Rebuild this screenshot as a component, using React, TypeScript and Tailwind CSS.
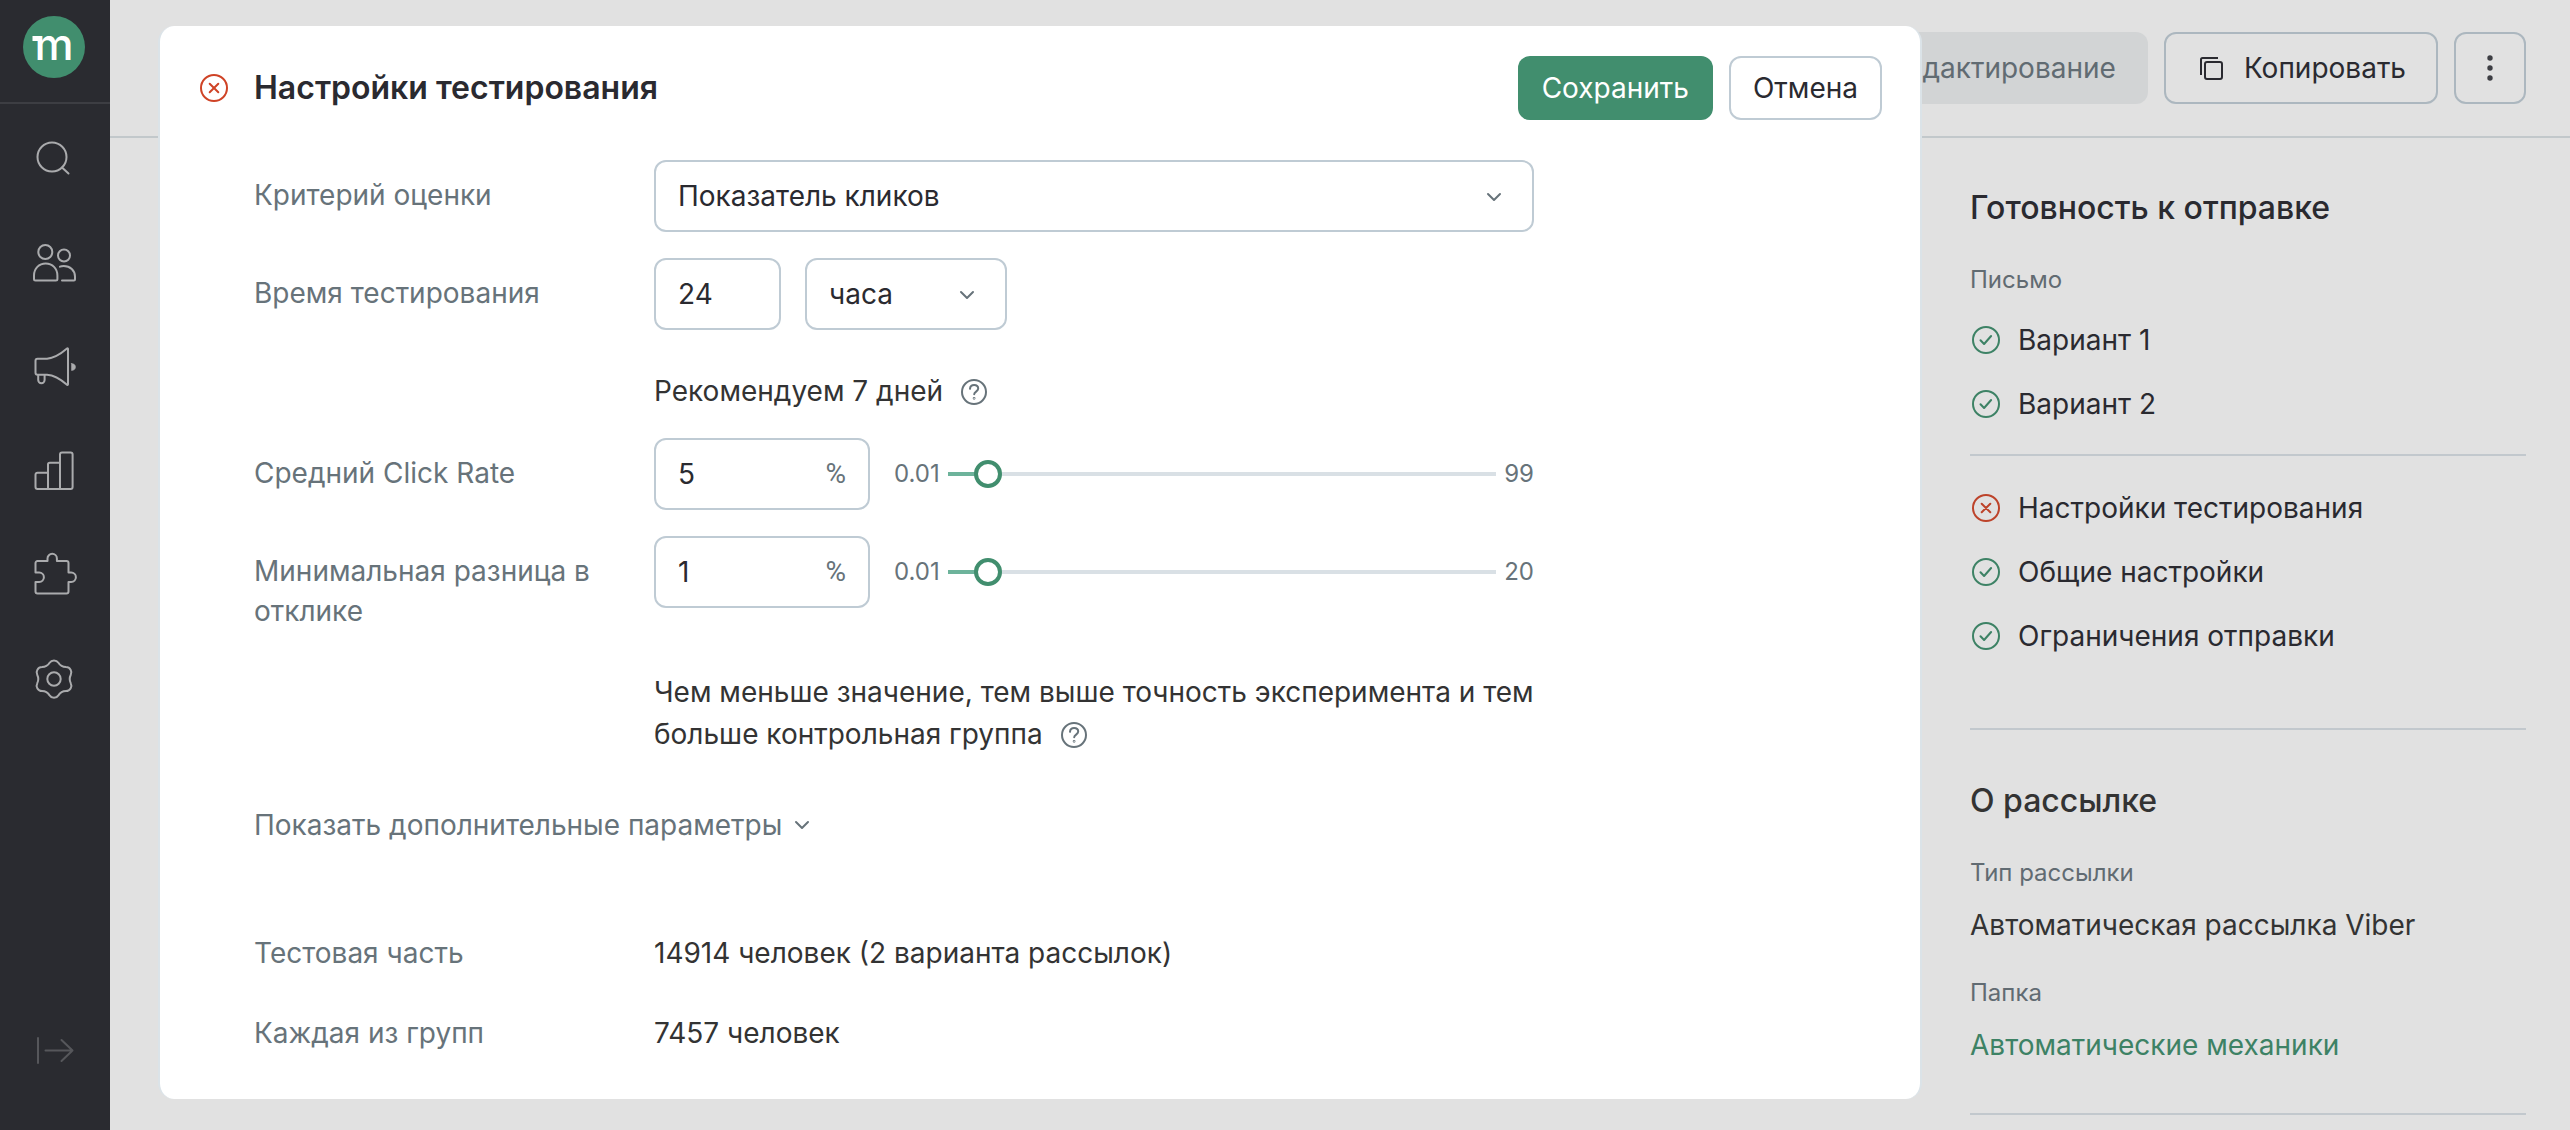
import { useState } from "react";
import type { ReactNode } from "react";

function Icon({ children }: { children: ReactNode }) {
  return (
    <svg
      width="44"
      height="44"
      viewBox="0 0 44 44"
      fill="none"
      stroke="currentColor"
      strokeWidth="2"
      strokeLinecap="round"
      strokeLinejoin="round"
      aria-hidden="true"
    >
      {children}
    </svg>
  );
}

const navItems = [
  {
    label: "Поиск",
    icon: (
      <>
        <circle cx="19" cy="21" r="14.5" />
        <path d="M29 31.5 35.5 37.5" />
      </>
    ),
  },
  {
    label: "Клиенты",
    icon: (
      <>
        <circle cx="12.3" cy="12" r="7" />
        <circle cx="31" cy="15.5" r="6" />
        <path d="M2.5 40.5a1.5 1.5 0 0 1-1.5-1.5v-3.500c0-7 5-12 11.700-12s11.700 5 11.700 12v3.500a1.500 1.500 0 0 1-1.500 1.500z" />
        <path d="M27 26.700c1-.5 2.300-.7 3.700-.7 6.500 0 11.300 4.500 11.300 10.500v3a1 1 0 0 1-1 1H29" />
      </>
    ),
  },
  {
    label: "Кампании",
    icon: (
      <>
        <path d="M14 14.700H4.500a2 2 0 0 0-2 2v12a2 2 0 0 0 2 2H14c8 .5 14 4.800 20 10 .6.5 1 .3 1-.4V5c0-.7-.4-.9-1-.4-6 5.200-12 9.600-20 10.100z" />
        <path d="M5.200 31v5a3.200 3.200 0 0 0 6.400 0v-5" />
        <path d="M38.500 19.500v7c2.300 0 4-1.500 4-3.500s-1.700-3.500-4-3.500z" fill="currentColor" strokeWidth="0.5" />
      </>
    ),
  },
  {
    label: "Отчеты",
    icon: (
      <>
        <path d="M4.500 24.700H15V16.500a1.800 1.800 0 0 1 1.800-1.800H27V6.500a2 2 0 0 1 2-2h8.600a2 2 0 0 1 2 2v32.500a2 2 0 0 1-2 2H4.500a2 2 0 0 1-2-2V26.700a2 2 0 0 1 2-2z" />
        <path d="M15 24.700V41M27 14.700V41" />
      </>
    ),
  },
  {
    label: "Интеграции",
    icon: (
      <path d="M4.500 9H14.500V6.500a4.700 4.700 0 0 1 9.400 0V9h9.600a2 2 0 0 1 2 2v9.500h2.700a4.600 4.600 0 0 1 0 9.400h-2.700v9.600a2 2 0 0 1-2 2H4.500a2 2 0 0 1-2-2v-9.600h3.700a4.600 4.600 0 0 0 0-9.400H2.500V11a2 2 0 0 1 2-2z" />
    ),
  },
  {
    label: "Настройки",
    icon: (
      <>
        <circle cx="21" cy="23" r="6.700" />
        <path d="M16.600 6.800C17.800 5 19.200 4.500 21 4.500s3.200.5 4.400 2.300c1.900 3 4 4.200 7.600 4.300 2.200 0 3.600.9 4.600 2.600s1.300 3.200.2 5.100c-1.600 3.200-1.600 5.400 0 8.600 1.100 1.900.8 3.400-.2 5.100s-2.400 2.600-4.600 2.600c-3.600.1-5.700 1.300-7.600 4.300-1.200 1.800-2.600 2.400-4.400 2.400s-3.200-.6-4.400-2.400c-1.900-3-4-4.200-7.600-4.300-2.200 0-3.600-.9-4.600-2.600s-1.300-3.200-.2-5.100c1.600-3.200 1.600-5.400 0-8.600-1.100-1.900-.8-3.400.2-5.100s2.400-2.600 4.600-2.600c3.600-.1 5.700-1.300 7.600-4.300z" />
      </>
    ),
  },
];

function Sidebar() {
  return (
    <aside className="flex w-[110px] shrink-0 flex-col items-center bg-[#2a2b30] text-[#aaabad]">
      <div className="flex w-full justify-center border-b-2 border-[#3d3e43] pt-4 pb-6">
        <a href="#home" aria-label="Главная">
          <svg width="64" height="62" viewBox="0 0 64 62">
            <circle cx="31" cy="31" r="31" fill="#418e6e" />
            <rect x="9.500" y="20" width="6" height="5" fill="#fff" />
            <text x="31" y="44" textAnchor="middle" fontSize="44" className="fill-white font-['Inter'] font-medium">
              m
            </text>
          </svg>
        </a>
      </div>

      <nav className="flex flex-col gap-[60px] pt-8">
        {navItems.map((item) => (
          <button key={item.label} type="button" aria-label={item.label}>
            <Icon>{item.icon}</Icon>
          </button>
        ))}
      </nav>

      <button type="button" aria-label="Развернуть меню" className="mt-auto mb-[58px] text-[#56575b]">
        <Icon>
          <path d="M5 10v25M12.500 22.500h27M28.500 12l11 10.500-11 10.500" />
        </Icon>
      </button>
    </aside>
  );
}

function StatusIcon({ ok, className }: { ok: boolean; className: string }) {
  return (
    <svg
      width="28"
      height="28"
      viewBox="0 0 28 28"
      fill="none"
      stroke="currentColor"
      strokeWidth="2"
      strokeLinecap="round"
      strokeLinejoin="round"
      className={className}
      aria-hidden="true"
    >
      <circle cx="14" cy="14" r="13" />
      {ok ? <path d="M8.500 14.200l3.600 3.800 7-8" /> : <path d="M9.700 9.700l8.600 8.600M18.300 9.700l-8.600 8.600" />}
    </svg>
  );
}

function HelpIcon() {
  return (
    <button type="button" aria-label="Подсказка" className="ml-[18px] inline-block align-[-4px] text-[#67737a]">
      <svg width="26" height="26" viewBox="0 0 26 26" fill="none" stroke="currentColor" strokeWidth="2" strokeLinecap="round">
        <circle cx="13" cy="13" r="12" />
        <path d="M9 9.800c.2-2.300 1.800-3.700 4.100-3.700s4.100 1.400 4.100 3.500c0 3-4 3-4 5.700" />
        <circle cx="13.100" cy="19.300" r="0.400" />
      </svg>
    </button>
  );
}

function Chevron({ className = "" }: { className?: string }) {
  return (
    <svg
      width="16"
      height="10"
      viewBox="0 0 16 10"
      fill="none"
      stroke="#67737a"
      strokeWidth="2"
      strokeLinecap="round"
      strokeLinejoin="round"
      className={className}
      aria-hidden="true"
    >
      <path d="M2 2l6 6 6-6" />
    </svg>
  );
}

function Select({ id, label, options, className }: { id: string; label?: string; options: string[]; className: string }) {
  return (
    <div className={`relative ${className}`}>
      <select
        id={id}
        aria-label={label}
        className="h-[72px] w-full appearance-none rounded-xl border-2 border-[#bfcbd4] bg-white px-[22px] text-[#2a2a30]"
      >
        {options.map((option) => (
          <option key={option}>{option}</option>
        ))}
      </select>
      <Chevron className="pointer-events-none absolute top-8 right-8" />
    </div>
  );
}

function Row({ label, htmlFor, children }: { label: string; htmlFor: string; children: ReactNode }) {
  return (
    <div className="flex">
      <label htmlFor={htmlFor} className="w-[400px] shrink-0 pt-[15px] pr-10 leading-10 text-[#67737a]">
        {label}
      </label>
      <div className="flex h-[72px] w-[880px] items-center">{children}</div>
    </div>
  );
}

function PercentSlider({ id, label, max, initial }: { id: string; label: string; max: number; initial: number }) {
  const [value, setValue] = useState(initial);
  const fill = ((value - 0.01) / (max - 0.01)) * 100;

  return (
    <>
      <div className="flex h-[72px] w-[216px] items-center rounded-xl border-2 border-[#bfcbd4] px-[22px]">
        <input
          id={id}
          type="text"
          value={value}
          onChange={(e) => setValue(Number(e.target.value) || 0.01)}
          className="w-full min-w-0 text-[#2a2a30] outline-none"
        />
        <span className="font-['Roboto',sans-serif] text-[#67737a]">%</span>
      </div>
      <div className="ml-6 flex flex-1 items-center gap-2 text-2xl text-[#67737a]">
        <span>0.01</span>
        <input
          type="range"
          aria-label={label}
          min={0.01}
          max={max}
          step="any"
          value={value}
          onChange={(e) => setValue(Number(Number(e.target.value).toFixed(2)))}
          style={{ backgroundImage: `linear-gradient(to right, #6db39b ${fill + 2}%, #d9e0e5 ${fill + 2}%)` }}
          className="
            h-7 min-w-0 flex-1 appearance-none bg-[length:100%_4px] bg-center bg-no-repeat
            [&::-webkit-slider-thumb]:h-7
            [&::-webkit-slider-thumb]:w-7
            [&::-webkit-slider-thumb]:appearance-none
            [&::-webkit-slider-thumb]:rounded-full
            [&::-webkit-slider-thumb]:border-4
            [&::-webkit-slider-thumb]:border-[#418e6e]
            [&::-webkit-slider-thumb]:bg-white
          "
        />
        <span>{max}</span>
      </div>
    </>
  );
}

function SettingsDialog() {
  return (
    <section
      role="dialog"
      aria-labelledby="dialog-title"
      className="absolute top-[26px] right-[648px] left-[158px] rounded-2xl border-x-2 border-[#dbe3e8] bg-white pb-[46px]"
    >
      <header className="flex items-center pt-[30px] pr-[38px] pl-10">
        <StatusIcon ok={false} className="text-[#cf4326]" />
        <h1 id="dialog-title" className="ml-[26px] text-[32px] leading-10 font-semibold text-[#2a2a30]">
          Настройки тестирования
        </h1>
        <div className="ml-auto flex gap-4">
          <button type="button" className="h-16 rounded-xl bg-[#418e6e] px-6 text-white">
            Сохранить
          </button>
          <button type="button" className="h-16 rounded-xl border-2 border-[#bfcbd4] px-[22px] text-[#2a2a30]">
            Отмена
          </button>
        </div>
      </header>

      <form className="mt-10 pl-[94px]">
        <div className="flex flex-col gap-[26px]">
          <Row label="Критерий оценки" htmlFor="criterion">
            <Select id="criterion" options={["Показатель кликов", "Показатель открытий"]} className="w-full" />
          </Row>
          <Row label="Время тестирования" htmlFor="duration">
            <input
              id="duration"
              type="text"
              defaultValue="24"
              className="h-[72px] w-[127px] rounded-xl border-2 border-[#bfcbd4] px-[22px] text-[#2a2a30]"
            />
            <Select id="unit" label="Единица времени" options={["часа", "дня"]} className="ml-6 w-[202px]" />
          </Row>
        </div>

        <p className="mt-10 mb-[26px] ml-[400px] leading-[42px]">
          Рекомендуем 7 дней
          <HelpIcon />
        </p>

        <div className="flex flex-col gap-[26px]">
          <Row label="Средний Click Rate" htmlFor="click-rate">
            <PercentSlider id="click-rate" label="Средний Click Rate" max={99} initial={5} />
          </Row>
          <Row label="Минимальная разница в отклике" htmlFor="difference">
            <PercentSlider id="difference" label="Минимальная разница" max={20} initial={1} />
          </Row>
        </div>

        <p className="mt-10 ml-[400px] w-[884px] leading-[42px]">
          Чем меньше значение, тем выше точность эксперимента и тем больше контрольная группа
          <HelpIcon />
        </p>

        <button type="button" className="mt-[50px] flex items-center gap-3 leading-10 text-[#67737a]">
          Показать дополнительные параметры
          <Chevron />
        </button>

        <dl className="mt-[88px] grid grid-cols-[400px_1fr] gap-y-10 leading-10">
          <dt className="text-[#67737a]">Тестовая часть</dt>
          <dd>14914 человек (2 варианта рассылок)</dd>
          <dt className="text-[#67737a]">Каждая из групп</dt>
          <dd>7457 человек</dd>
        </dl>
      </form>
    </section>
  );
}

function StatusList({ items }: { items: { name: string; ok: boolean }[] }) {
  return (
    <ul className="flex flex-col gap-6">
      {items.map((item) => (
        <li key={item.name} className="flex items-center pl-[2px] leading-10 text-[#2a2a30]">
          <StatusIcon ok={item.ok} className={item.ok ? "text-[#3d8265]" : "text-[#bd432a]"} />
          <span className="ml-[18px]">{item.name}</span>
        </li>
      ))}
    </ul>
  );
}

function SummaryPanel() {
  return (
    <aside className="ml-auto w-[600px] pt-[50px] pr-[44px]">
      <section>
        <h2 className="text-[32px] leading-10 font-medium text-[#2a2a30]">Готовность к отправке</h2>
        <h3 className="mt-9 mb-6 text-2xl text-[#616b72]">Письмо</h3>
        <StatusList
          items={[
            { name: "Вариант 1", ok: true },
            { name: "Вариант 2", ok: true },
          ]}
        />
        <hr className="mt-[30px] mb-8 border-t-2 border-[#c2c8cd]" />
        <StatusList
          items={[
            { name: "Настройки тестирования", ok: false },
            { name: "Общие настройки", ok: true },
            { name: "Ограничения отправки", ok: true },
          ]}
        />
      </section>

      <hr className="mt-[72px] mb-[51px] border-t-2 border-[#c2c8cd]" />

      <section>
        <h2 className="text-[32px] leading-10 font-medium">О рассылке</h2>
        <dl className="mt-9">
          <dt className="text-2xl text-[#616b72]">Тип рассылки</dt>
          <dd className="mt-4 leading-10">Автоматическая рассылка Viber</dd>
          <dt className="mt-8 text-2xl text-[#616b72]">Папка</dt>
          <dd className="mt-4 leading-10">
            <a href="#folder" className="text-[#3d8265]">
              Автоматические механики
            </a>
          </dd>
        </dl>
        <hr className="mt-12 border-t-2 border-[#c2c8cd]" />
      </section>
    </aside>
  );
}

export default function App() {
  return (
    <div className="relative flex min-h-screen bg-[#e1e1e1] font-['Inter',sans-serif] text-[28px] text-[#333333]">
      <Sidebar />

      <main className="flex-1">
        <header className="flex justify-end gap-4 border-b-2 border-[#c2c8cb] py-8 pr-[44px]">
          <button type="button" disabled className="h-[72px] rounded-xl bg-[#d2d4d5] px-8 text-[#616b72]">
            Редактирование
          </button>
          <button
            type="button"
            className="flex h-[72px] items-center gap-4 rounded-xl border-2 border-[#acb7bf] px-[30px] text-[#2a2a30]"
          >
            <svg width="32" height="32" viewBox="0 0 32 32" fill="none" stroke="currentColor" strokeWidth="2" aria-hidden="true">
              <rect x="9" y="10" width="17" height="17" rx="2" />
              <path d="M5 23V7.500A1.500 1.500 0 0 1 6.500 6H22" />
            </svg>
            Копировать
          </button>
          <button
            type="button"
            aria-label="Еще"
            className="flex h-[72px] w-[72px] items-center justify-center rounded-xl border-2 border-[#acb7bf] text-[#3d3e43]"
          >
            <svg width="6" height="26" viewBox="0 0 6 26" fill="currentColor">
              <circle cx="3" cy="3" r="2.700" />
              <circle cx="3" cy="13" r="2.700" />
              <circle cx="3" cy="23" r="2.700" />
            </svg>
          </button>
        </header>
        <SummaryPanel />
      </main>

      <SettingsDialog />
    </div>
  );
}
